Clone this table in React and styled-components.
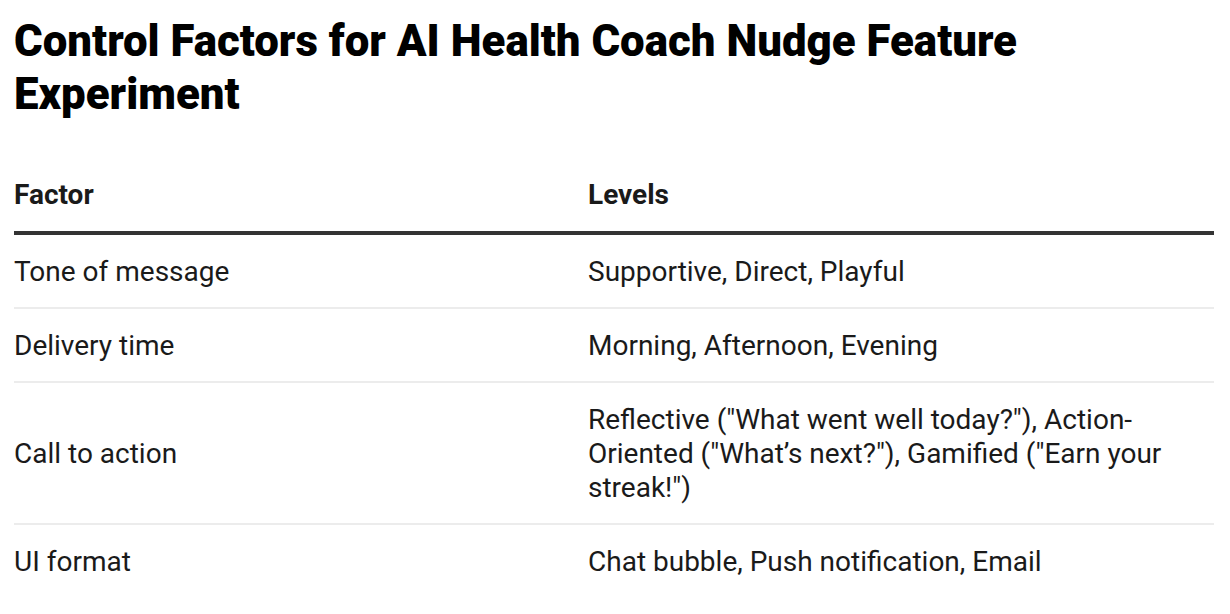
import React from "react";
import styled, { createGlobalStyle } from "styled-components";

const Global = createGlobalStyle`
  html, body { margin: 0; padding: 0; background: #ffffff; }
  body { font-family: Roboto, "Liberation Sans", Arial, sans-serif; color: #1a1a1a; }
`;

const Page = styled.div`
  padding: 15px 16px 0 14px;
`;

const Title = styled.h1`
  margin: 0 0 37px;
  font-size: 43.8px;
  line-height: 53px;
  font-weight: 900;
  color: #000;
`;

const Table = styled.table`
  width: 100%;
  border-collapse: collapse;
  table-layout: fixed;
`;

const HeadCell = styled.th`
  text-align: left;
  font-size: 28px;
  line-height: 34px;
  font-weight: 700;
  color: #1a1a1a;
  padding: 20px 0 19px;
  border-bottom: 4px solid #333333;
  width: ${(p) => p.$w || "auto"};
`;

const Row = styled.tr`
  border-bottom: 2px solid ${(p) => (p.$last ? "transparent" : "#ececec")};
`;

const Cell = styled.td`
  font-size: 28px;
  line-height: 34px;
  color: #1a1a1a;
  padding: 20px 20px 18px 0;
  vertical-align: middle;
`;

const rows = [
  ["Tone of message", "Supportive, Direct, Playful"],
  ["Delivery time", "Morning, Afternoon, Evening"],
  [
    "Call to action",
    "Reflective (\"What went well today?\"), Action-Oriented (\"What\u2019s next?\"), Gamified (\"Earn your streak!\")",
  ],
  ["UI format", "Chat bubble, Push notification, Email"],
];

export default function App() {
  return (
    <Page>
      <Global />
      <Title>Control Factors for AI Health Coach Nudge Feature Experiment</Title>
      <Table>
        <thead>
          <tr>
            <HeadCell $w="574px">Factor</HeadCell>
            <HeadCell>Levels</HeadCell>
          </tr>
        </thead>
        <tbody>
          {rows.map(([f, l], i) => (
            <Row key={f} $last={i === rows.length - 1}>
              <Cell>{f}</Cell>
              <Cell>{l}</Cell>
            </Row>
          ))}
        </tbody>
      </Table>
    </Page>
  );
}
